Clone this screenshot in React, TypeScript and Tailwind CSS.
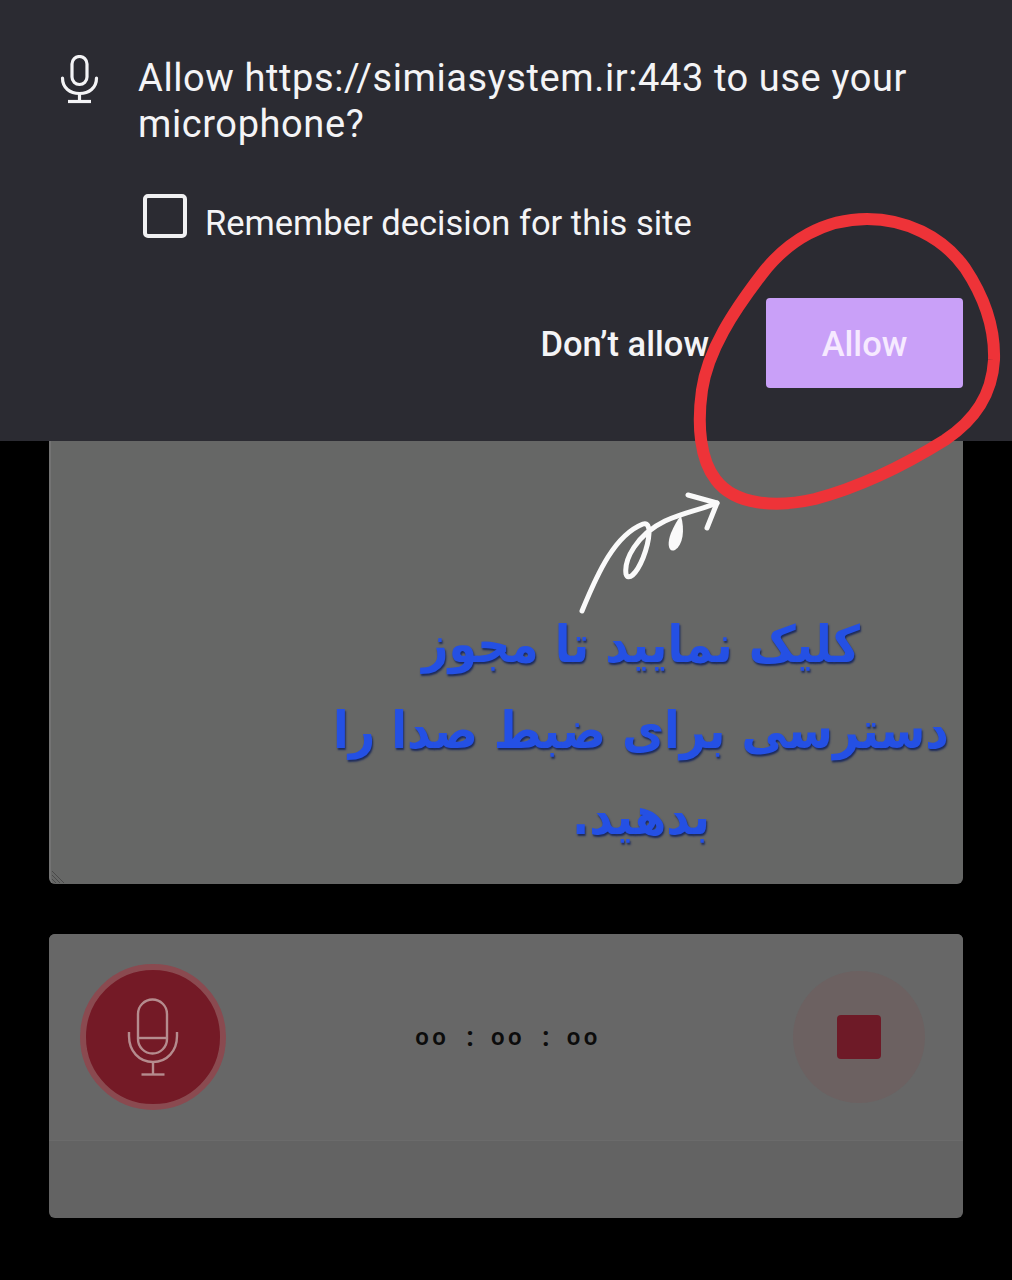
export default function App() {
  return (
    <div className="relative h-[1280px] w-[1012px] overflow-hidden bg-black font-['Roboto',sans-serif]">
      <header className="h-[441px] bg-[#2b2b32] pt-[55px] text-[#f4f4f6]">
        <div className="flex pl-[59px] pr-[90px]">
          <svg viewBox="0 0 40 50" className="h-[50px] w-[40px] shrink-0" fill="none" stroke="#f4f4f6" strokeWidth="3.2" strokeLinecap="round">
            <rect x="13" y="1.5" width="15" height="28" rx="7.5" />
            <path d="M3.5 23 C3.5 33 11 38.5 20.5 38.5 C30 38.5 37.5 33 37.5 23" />
            <path d="M20.5 38.5 V46" />
            <path d="M9 46.5 H32" strokeLinecap="butt" />
          </svg>
          <p className="ml-[39px] text-[38px] leading-[46px] tracking-[0.6px]">Allow https://simiasystem.ir:443 to use your microphone?</p>
        </div>
        <div className="mt-[47px] flex h-[44px] items-center pl-[143px]">
          <span className="h-[44px] w-[44px] rounded-[5px] border-[4px] border-[#f0f0f2]" />
          <span className="ml-[18px] mt-[13px] text-[34.5px] leading-[44px]">Remember decision for this site</span>
        </div>
        <div className="mt-[60px] flex h-[90px] items-center justify-end pr-[49px]">
          <button className="pt-[3px] text-[34.5px] font-medium">Don’t allow</button>
          <button className="ml-[57px] h-[90px] w-[197px] rounded-[4px] bg-[#c9a0f8] pt-[3px] text-[34.5px] font-medium text-[#f6eaff]">Allow</button>
        </div>
      </header>

      <main className="px-[49px]">
        <section className="relative h-[443px] rounded-b-[6px] border-l-2 border-[#737373] bg-[#666766]">
          <svg viewBox="0 0 16 16" className="absolute bottom-0 left-0 h-[16px] w-[16px]" stroke="#4a4a4a" strokeWidth="1">
            <path d="M1 3 L13 15 M1 7 L9 15 M1 11 L5 15" />
          </svg>
          <div dir="rtl" className="ml-auto w-[644px] whitespace-nowrap pt-[161px] text-center font-['DejaVu_Sans_Condensed','DejaVu_Sans',sans-serif] text-[51px] font-bold leading-[86px] text-[#2450e4] [text-shadow:1px_2px_2px_#1c2a5c]">
            <p>کلیک نمایید تا مجوز</p>
            <p>دسترسی برای ضبط صدا را</p>
            <p>بدهید.</p>
          </div>
        </section>

        <section className="mt-[50px] h-[284px] overflow-hidden rounded-[6px] bg-[#636363]">
          <div className="flex h-[207px] items-center justify-between border-b border-[#6b6b6b] bg-[#676767] pl-[31px] pr-[38px]">
            <button className="flex h-[146px] w-[146px] items-center justify-center rounded-full border-[6px] border-[#8a4a50] bg-[#741a26]">
              <svg viewBox="0 0 52 78" className="h-[78px] w-[52px]" fill="none" stroke="#b58c8e" strokeWidth="2.4">
                <rect x="11" y="1.5" width="29" height="54" rx="14.5" />
                <path d="M11 40 H40" />
                <path d="M2 34 V38 C2 53 12 64 26 64 C40 64 50 53 50 38 V34" />
                <path d="M26 64 V76" />
                <path d="M14.5 76.5 H37.5" />
              </svg>
            </button>
            <div className="mr-[3px] flex items-center text-[24px] font-semibold leading-none text-[#0c0c0c]">
              <span className="tracking-[3.5px]">oo</span>
              <span className="mx-[17px] text-[27px] font-bold">:</span>
              <span className="tracking-[3.5px]">oo</span>
              <span className="mx-[17px] text-[27px] font-bold">:</span>
              <span className="tracking-[3.5px]">oo</span>
            </div>
            <button className="flex h-[132px] w-[132px] items-center justify-center rounded-full bg-[#6c6161]">
              <span className="h-[44px] w-[44px] rounded-[4px] bg-[#6e1a27]" />
            </button>
          </div>
        </section>
      </main>

      <svg viewBox="0 0 1012 1280" className="pointer-events-none absolute left-0 top-0 h-[1280px] w-[1012px]" fill="none" strokeLinecap="round" strokeLinejoin="round">
        <path
          d="M867 219 C905 219 942 236 965 268 C985 298 995 330 994 360 C992 395 975 420 945 440 C905 465 860 487 815 499 C775 508 735 505 716 480 C700 460 697 425 702 390 C708 350 733 312 762 274 C788 240 825 219 867 219 Z"
          stroke="#ee3338"
          strokeWidth="12"
        />
        <path
          d="M582 611 C598 572 615 535 643 524 C652 521 650 540 643 558 C636 575 628 581 626 574 C624 560 636 535 665 521 C685 512 700 510 717 503"
          stroke="#fafafa"
          strokeWidth="5"
        />
        <path d="M681 516 C685 530 683 545 675 550 C668 553 667 543 671 533 C674 526 677 520 681 516 Z" fill="#fafafa" />
        <path d="M688 495 L717 503 L707 528" stroke="#fafafa" strokeWidth="5" />
      </svg>
    </div>
  );
}
